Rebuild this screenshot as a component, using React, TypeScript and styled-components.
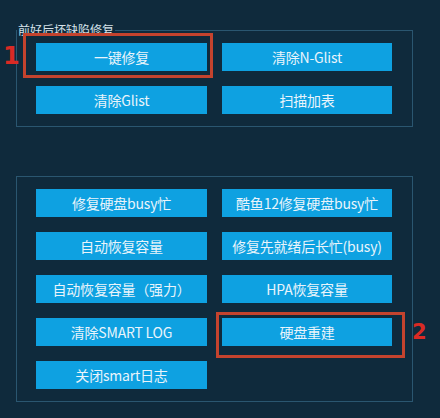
import React from "react";
import styled, { createGlobalStyle } from "styled-components";

const Global = createGlobalStyle`
  html, body { margin: 0; padding: 0; background: #0f2a3c; }
  body { width: 440px; height: 418px; overflow: hidden; font-family: "Noto Sans CJK SC", "Noto Sans", sans-serif; }
`;

const Page = styled.div`
  display: flex;
  flex-direction: column;
  gap: 49px;
  padding: 22px 0 0 16px;
  width: 397px;
`;

const Group = styled.fieldset<{ $legend?: boolean }>`
  margin: 0;
  min-width: 0;
  border: 1px solid #2a5670;
  padding: ${(p) => (p.$legend ? "5px 20px 12px 19px" : "12px 20px 12px 19px")};
  width: 397px;
  box-sizing: border-box;
`;

const Legend = styled.legend`
  font-size: 12px;
  line-height: 16px;
  color: #d6e2ea;
  padding: 0 1px;
  margin-left: -19px;
  letter-spacing: 0;
`;

const Grid = styled.div`
  display: grid;
  grid-template-columns: 171px 170px;
  column-gap: 15px;
  row-gap: 15px;
`;

const Btn = styled.div`
  height: 28px;
  background: #0ea1e1;
  color: #e9f4fb;
  font-size: 14px;
  display: flex;
  align-items: center;
  justify-content: center;
  white-space: nowrap;
  letter-spacing: -0.2px;
`;

const Marked = styled.div`
  position: relative;
`;

const Frame = styled.div<{ $t: number; $r: number; $b: number; $l: number }>`
  position: absolute;
  top: ${(p) => -p.$t}px;
  right: ${(p) => -p.$r}px;
  bottom: ${(p) => -p.$b}px;
  left: ${(p) => -p.$l}px;
  border: 3px solid #c4432e;
  pointer-events: none;
`;

const Num = styled.span<{ $x: number; $y: number; $size: number }>`
  position: absolute;
  left: ${(p) => p.$x}px;
  top: ${(p) => p.$y}px;
  font-family: "DejaVu Sans", sans-serif;
  font-weight: bold;
  font-size: ${(p) => p.$size}px;
  line-height: 1;
  color: #d92a24;
`;

export default function App() {
  return (
    <>
      <Global />
      <Page>
        <Group $legend>
          <Legend>前好后坏缺陷修复</Legend>
          <Grid>
            <Marked>
              <Btn>一键修复</Btn>
              <Frame $t={10} $r={6} $b={7} $l={13} />
              <Num $x={-33} $y={1} $size={24}>1</Num>
            </Marked>
            <Btn>清除N-Glist</Btn>
            <Btn>清除Glist</Btn>
            <Btn>扫描加表</Btn>
          </Grid>
        </Group>
        <Group>
          <Grid>
            <Btn>修复硬盘busy忙</Btn>
            <Btn>酷鱼12修复硬盘busy忙</Btn>
            <Btn>自动恢复容量</Btn>
            <Btn>修复先就绪后长忙(busy)</Btn>
            <Btn>自动恢复容量（强力）</Btn>
            <Btn>HPA恢复容量</Btn>
            <Btn>清除SMART LOG</Btn>
            <Marked>
              <Btn>硬盘重建</Btn>
              <Frame $t={6} $r={13} $b={12} $l={6} />
              <Num $x={190} $y={4} $size={21}>2</Num>
            </Marked>
            <Btn>关闭smart日志</Btn>
          </Grid>
        </Group>
      </Page>
    </>
  );
}
